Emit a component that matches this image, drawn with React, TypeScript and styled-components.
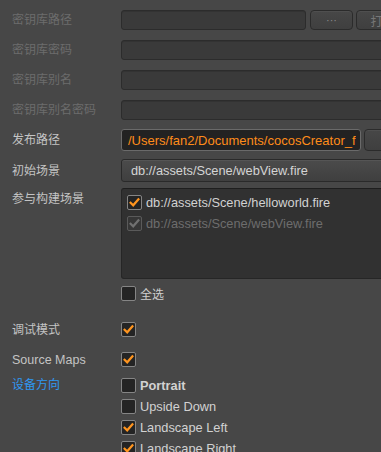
import React from "react";
import styled, { createGlobalStyle, css } from "styled-components";

const Global = createGlobalStyle`
  html, body {
    margin: 0;
    padding: 0;
    background: #474747;
    overflow: hidden;
  }
  body {
    font-family: "Liberation Sans", "Noto Sans CJK SC", sans-serif;
    -webkit-font-smoothing: antialiased;
  }
`;

const Panel = styled.div`
  width: 420px;
  box-sizing: border-box;
  padding: 10px 10px 0 12px;
  display: flex;
  flex-direction: column;
`;

const Row = styled.div<{ $mt?: number; $h?: number; $top?: boolean }>`
  display: flex;
  align-items: ${(p) => (p.$top ? "flex-start" : "center")};
  margin-top: ${(p) => p.$mt ?? 0}px;
  ${(p) => (p.$h ? `height: ${p.$h}px;` : "")}
`;

const Label = styled.div<{ $tone?: "disabled" | "normal" | "blue"; $lh?: number; $latin?: boolean }>`
  width: 109px;
  flex: none;
  font-size: ${(p) => (p.$latin ? "12.5px" : "12px")};
  line-height: ${(p) => p.$lh ?? 16}px;
  white-space: nowrap;
  color: ${(p) =>
    p.$tone === "disabled" ? "#6c6c6c" : p.$tone === "blue" ? "#2f98f2" : "#c4c4c4"};
`;

const Controls = styled.div<{ $col?: boolean }>`
  flex: 1;
  min-width: 0;
  display: flex;
  flex-direction: ${(p) => (p.$col ? "column" : "row")};
  align-items: stretch;
  height: 100%;
`;

const Input = styled.div<{ $variant?: "disabled" | "path" }>`
  flex: 1;
  min-width: 0;
  box-sizing: border-box;
  border-radius: 3px;
  display: flex;
  align-items: center;
  padding: 0 4px 0 6px;
  font-size: 13px;
  ${(p) =>
    p.$variant === "path"
      ? css`
          background: #222222;
          border: 1px solid #6a6a6a;
          color: #ff8c1a;
        `
      : css`
          background: #3a3a3a;
          border: 1px solid #2c2c2c;
          box-shadow: inset 0 1px 0 #333;
        `}
`;

const InputText = styled.span`
  display: block;
  flex: 1;
  min-width: 0;
  overflow: hidden;
  white-space: nowrap;
`;

const Button = styled.div<{ $w: number; $ml?: number }>`
  flex: none;
  width: ${(p) => p.$w}px;
  margin-left: ${(p) => p.$ml ?? 0}px;
  box-sizing: border-box;
  border-radius: 4px;
  border: 1px solid #2b2b2b;
  background: linear-gradient(#474747, #3f3f3f);
  box-shadow: inset 0 1px 0 #4f4f4f;
  color: #767676;
  font-size: 12.5px;
  display: flex;
  align-items: center;
  justify-content: center;
  overflow: hidden;
  white-space: nowrap;
`;

const Select = styled.div`
  flex: 1;
  box-sizing: border-box;
  border-radius: 3px;
  border: 1px solid #2a2a2a;
  background: linear-gradient(#4b4b4b, #3f3f3f);
  box-shadow: inset 0 1px 0 #555;
  color: #d4d4d4;
  font-size: 12.8px;
  display: flex;
  align-items: center;
  padding: 0 9px;
  white-space: nowrap;
`;

const ListBox = styled.div`
  flex: 1;
  height: 91px;
  box-sizing: border-box;
  border-radius: 3px;
  border: 1px solid #262626;
  border-top-color: #1e1e1e;
  background: #313131;
  padding: 3px 5px;
  display: flex;
  flex-direction: column;
`;

const Item = styled.div<{ $h?: number }>`
  display: flex;
  align-items: center;
  gap: 4px;
  height: ${(p) => p.$h ?? 21}px;
  white-space: nowrap;
`;

const ItemText = styled.span<{ $dim?: boolean; $bold?: boolean }>`
  font-size: 12.8px;
  color: ${(p) => (p.$dim ? "#6d6d6d" : "#d2d2d2")};
  font-weight: ${(p) => (p.$bold ? 700 : 400)};
`;

const CJKText = styled.span`
  font-size: 12px;
  color: #cfcfcf;
`;

const Box = styled.div<{ $disabled?: boolean }>`
  width: 15px;
  height: 15px;
  flex: none;
  box-sizing: border-box;
  border-radius: 2px;
  border: 1px solid ${(p) => (p.$disabled ? "#5a5a5a" : "#858585")};
  background: ${(p) => (p.$disabled ? "#363636" : "#242424")};
  display: flex;
  align-items: center;
  justify-content: center;
`;

const Check = ({ checked, disabled }: { checked?: boolean; disabled?: boolean }) => (
  <Box $disabled={disabled}>
    {checked && (
      <svg width="13" height="13" viewBox="0 0 13 13">
        <path
          d="M2.6 6.8 L5.2 9.3 L10.4 3.4"
          fill="none"
          stroke={disabled ? "#707070" : "#ff951f"}
          strokeWidth="2.2"
          strokeLinecap="square"
        />
      </svg>
    )}
  </Box>
);

const Dots = styled.span`
  font-size: 11px;
  color: #8a8a8a;
  line-height: 1;
`;

export default function App() {
  return (
    <>
      <Global />
      <Panel>
        <Row $h={20}>
          <Label $tone="disabled">密钥库路径</Label>
          <Controls>
            <Input $variant="disabled" />
            <Button $w={43} $ml={4}>
              <Dots>···</Dots>
            </Button>
            <Button $w={54} $ml={3}>
              打开
            </Button>
          </Controls>
        </Row>
        <Row $h={20} $mt={10}>
          <Label $tone="disabled">密钥库密码</Label>
          <Controls>
            <Input $variant="disabled" />
          </Controls>
        </Row>
        <Row $h={20} $mt={10}>
          <Label $tone="disabled">密钥库别名</Label>
          <Controls>
            <Input $variant="disabled" />
          </Controls>
        </Row>
        <Row $h={20} $mt={10}>
          <Label $tone="disabled">密钥库别名密码</Label>
          <Controls>
            <Input $variant="disabled" />
          </Controls>
        </Row>
        <Row $h={22} $mt={9}>
          <Label>发布路径</Label>
          <Controls>
            <Input $variant="path">
              <InputText>/Users/fan2/Documents/cocosCreator_f</InputText>
            </Input>
            <Button $w={46} $ml={3} />
          </Controls>
        </Row>
        <Row $h={23} $mt={8}>
          <Label>初始场景</Label>
          <Controls>
            <Select>db://assets/Scene/webView.fire</Select>
          </Controls>
        </Row>
        <Row $mt={6} $top>
          <Label $lh={22}>参与构建场景</Label>
          <ListBox>
            <Item>
              <Check checked />
              <ItemText>db://assets/Scene/helloworld.fire</ItemText>
            </Item>
            <Item>
              <Check checked disabled />
              <ItemText $dim>db://assets/Scene/webView.fire</ItemText>
            </Item>
          </ListBox>
        </Row>
        <Row $mt={7}>
          <Label />
          <Item $h={15}>
            <Check />
            <CJKText>全选</CJKText>
          </Item>
        </Row>
        <Row $mt={21} $h={15}>
          <Label>调试模式</Label>
          <Check checked />
        </Row>
        <Row $mt={15} $h={15}>
          <Label $latin>Source Maps</Label>
          <Check checked />
        </Row>
        <Row $mt={8} $top>
          <Label $tone="blue" $lh={20}>设备方向</Label>
          <Controls $col>
            <Item>
              <Check />
              <ItemText $bold>Portrait</ItemText>
            </Item>
            <Item>
              <Check />
              <ItemText>Upside Down</ItemText>
            </Item>
            <Item>
              <Check checked />
              <ItemText>Landscape Left</ItemText>
            </Item>
            <Item>
              <Check checked />
              <ItemText>Landscape Right</ItemText>
            </Item>
          </Controls>
        </Row>
      </Panel>
    </>
  );
}
